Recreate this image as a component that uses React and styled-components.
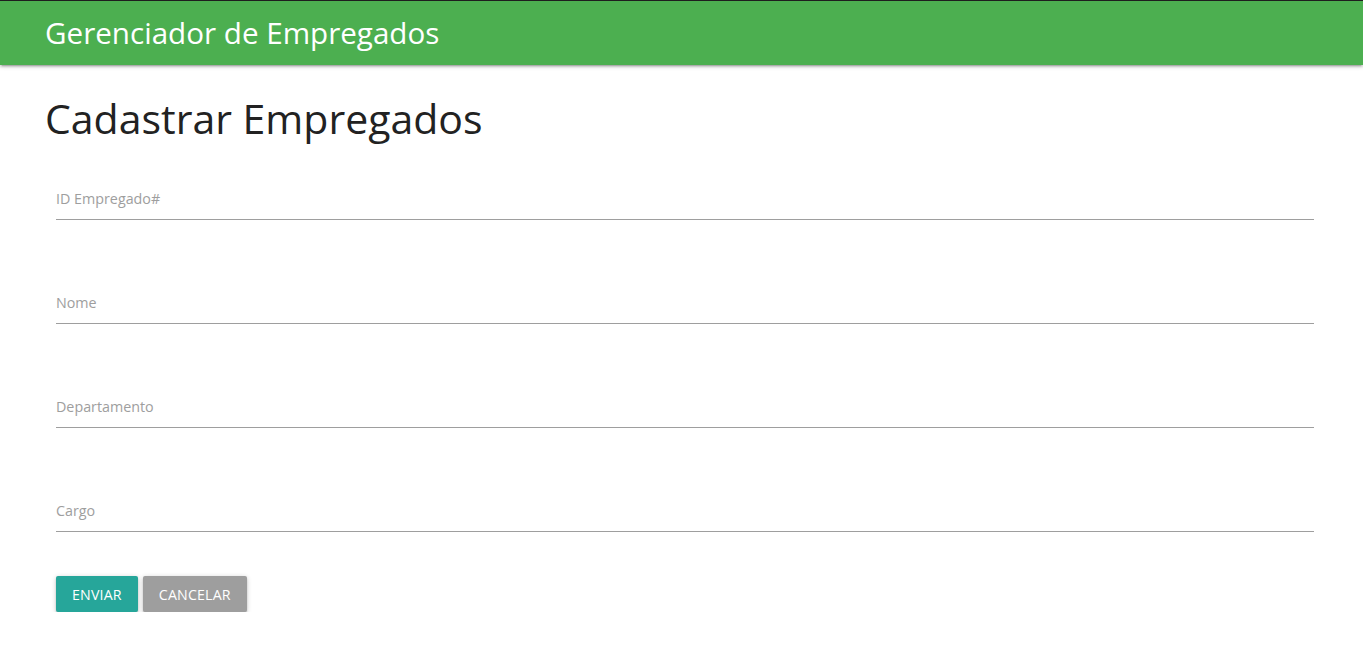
import React from "react";
import styled, { createGlobalStyle } from "styled-components";

const Global = createGlobalStyle`
  html, body { margin: 0; padding: 0; background: #fff; }
  body { font-family: "Open Sans", "Noto Sans", sans-serif; color: rgba(0,0,0,0.87); }
  * { box-sizing: border-box; }
`;

const Nav = styled.nav`
  height: 65px;
  border-top: 1px solid #1e1e1e;
  background: #4caf50;
  box-shadow: 0 2px 2px 0 rgba(0,0,0,0.14), 0 3px 1px -2px rgba(0,0,0,0.12), 0 1px 5px 0 rgba(0,0,0,0.2);
  padding: 0 45px;
  display: flex;
  align-items: center;
  position: relative;
  z-index: 1;
`;

const Brand = styled.a`
  color: #fff;
  font-size: 29.6px;
  line-height: 64px;
  text-decoration: none;
`;

const Main = styled.main`
  padding: 0 49px 0 45px;
`;

const Title = styled.h1`
  margin: 31px 0 33px;
  font-size: 41px;
  line-height: 1.1;
  font-weight: 400;
  color: #222;
`;

const Form = styled.form`
  display: flex;
  flex-direction: column;
  gap: 58px;
  padding: 0 0 0 11px;
`;

const Input = styled.input`
  display: block;
  width: 100%;
  height: 46px;
  border: none;
  border-bottom: 1px solid #9e9e9e;
  background: transparent;
  outline: none;
  padding: 4px 0 0;
  font: inherit;
  font-size: 14.3px;
  color: #333;
  &::placeholder { color: #9e9e9e; opacity: 1; }
`;

const Actions = styled.div`
  display: flex;
  gap: 5px;
  margin-top: -14px;
`;

const Button = styled.button`
  height: 36px;
  padding: 0 16px;
  border: none;
  border-radius: 2px;
  background: ${p => (p.$variant === "grey" ? "#9e9e9e" : "#26a69a")};
  color: #fff;
  font: inherit;
  font-size: 14.2px;
  letter-spacing: 0.18px;
  text-transform: uppercase;
  box-shadow: 0 2px 2px 0 rgba(0,0,0,0.14), 0 3px 1px -2px rgba(0,0,0,0.12), 0 1px 5px 0 rgba(0,0,0,0.2);
  cursor: pointer;
`;

const fields = ["ID Empregado#", "Nome", "Departamento", "Cargo"];

export default function App() {
  return (
    <>
      <Global />
      <Nav>
        <Brand href="#">Gerenciador de Empregados</Brand>
      </Nav>
      <Main>
        <Title>Cadastrar Empregados</Title>
        <Form onSubmit={e => e.preventDefault()}>
          {fields.map(f => (
            <Input key={f} placeholder={f} aria-label={f} />
          ))}
          <Actions>
            <Button type="submit">Enviar</Button>
            <Button type="button" $variant="grey">Cancelar</Button>
          </Actions>
        </Form>
      </Main>
    </>
  );
}
